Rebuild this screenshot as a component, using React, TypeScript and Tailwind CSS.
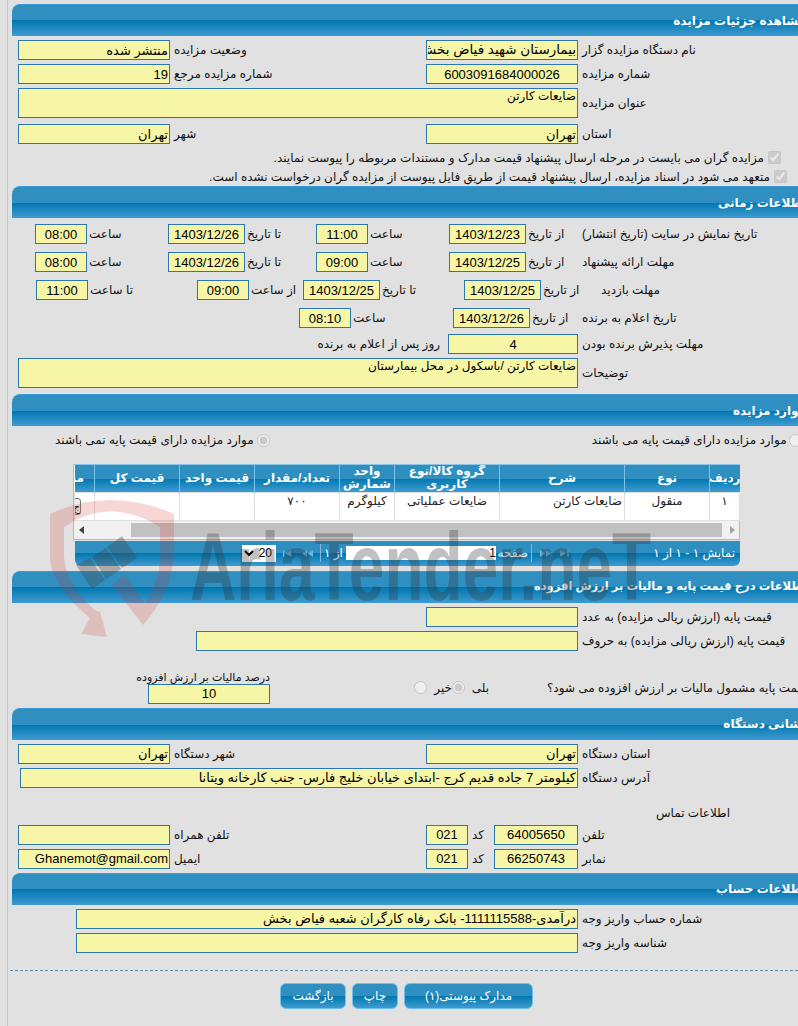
import type { ReactNode } from "react";

const font = "font-['Liberation_Sans','DejaVu_Sans',sans-serif]";
const band =
  "bg-[linear-gradient(to_bottom,#2e8fc0_0%,#2e8fc0_50%,#0077b0_50%,#3f9bd0_100%)]";

function Field({
  value = "",
  w,
  center,
  size = "text-[13px]",
}: {
  value?: string;
  w: string;
  center?: boolean;
  size?: string;
}) {
  return (
    <input
      readOnly
      value={value}
      dir="rtl"
      className={`${w} ${size} h-5 shrink-0 border border-[#2b78ab] bg-[#f7f5a6] px-px text-black outline-none ${
        center ? "text-center" : "text-right"
      }`}
    />
  );
}

function Area({ value = "" }: { value?: string }) {
  return (
    <textarea
      readOnly
      dir="rtl"
      value={value}
      className="h-[30px] w-[560px] shrink-0 resize-none overflow-hidden border border-[#2b78ab] bg-[#f7f5a6] px-px text-[12px] leading-[15px] text-black outline-none"
    />
  );
}

function Label({ children, w, tight }: { children?: ReactNode; w?: string; tight?: boolean }) {
  return (
    <span
      dir="rtl"
      className={`${w ?? ""} ${tight ? "pl-[2px]" : "pl-1"} shrink-0 whitespace-nowrap text-left text-[12px] text-[#111]`}
    >
      {children}
    </span>
  );
}

function Header({ title, size = "text-[12px]" }: { title: string; size?: string }) {
  return (
    <div className={`ml-3 flex h-8 w-[794px] items-center justify-end rounded-tl-lg border-t border-[#3a9ad9] ${band}`}>
      <span dir="rtl" className={`${size} whitespace-nowrap font-bold text-white`}>
        {title}
      </span>
    </div>
  );
}

function Row({ children, className = "" }: { children: ReactNode; className?: string }) {
  return <div className={`flex items-center ${className}`}>{children}</div>;
}

function PagerIcon({ d, w }: { d: string; w: string }) {
  return (
    <svg viewBox="0 0 11 7" className={`${w} h-[7px] shrink-0`}>
      <path d={d} fill="#6fb3d6" />
    </svg>
  );
}

const columns = [
  { title: "ردیف", w: "w-[30px]" },
  { title: "نوع", w: "w-[85px]" },
  { title: "شرح", w: "w-[125px]" },
  { title: "گروه کالا/نوع کاربری", w: "w-[105px]" },
  { title: "واحد شمارش", w: "w-[55px]" },
  { title: "تعداد/مقدار", w: "w-[85px]" },
  { title: "قیمت واحد", w: "w-[75px]" },
  { title: "قیمت کل", w: "w-[85px]" },
  { title: "مدیریت", w: "w-[20px]" },
];

const cell = "border border-[#e0e0e0] leading-4";

function ItemsTable() {
  return (
    <div className="ml-[73px] mt-4 w-[667px] border border-[#8cc6e6] bg-white">
      <table dir="rtl" className="w-[665px] table-fixed border-collapse text-[12px]">
        <thead>
          <tr className={`h-[27px] ${band}`}>
            {columns.map((c) => (
              <th
                key={c.title}
                className={`${c.w} overflow-hidden border-l border-[#7cc4ea] px-0 text-center text-[12px] font-bold leading-[13px] text-white last:border-l-0 last:whitespace-nowrap last:pr-[10px] last:text-right`}
              >
                {c.title}
              </th>
            ))}
          </tr>
        </thead>
        <tbody>
          <tr className="h-[28px] align-top text-[#222]">
            <td className={`${cell} text-center`}>١</td>
            <td className={`${cell} text-center`}>منقول</td>
            <td className={`${cell} pr-0.5 text-right`}>ضایعات کارتن</td>
            <td className={`${cell} text-center`}>ضایعات عملیاتی</td>
            <td className={`${cell} text-center`}>کیلوگرم</td>
            <td className={`${cell} text-center`}>٧٠٠</td>
            <td className={cell} />
            <td className={cell} />
            <td className={`${cell} overflow-hidden`}>
              <button className="mr-[13px] mt-[5px] block h-[17px] w-[30px] rounded-[3px] border border-[#777] bg-[#efefef] text-right text-[11px]">
                ج
              </button>
            </td>
          </tr>
        </tbody>
      </table>
      <div className="flex h-[18px] items-center bg-[#f1f1f1]">
        <svg width="8" height="8" viewBox="0 0 8 8" className="ml-[4px]">
          <path d="M6 0v8L1 4z" fill="#444" />
        </svg>
        <div className="ml-[45px] h-[14px] w-[591px] bg-[#c1c1c1]" />
        <svg width="8" height="8" viewBox="0 0 8 8" className="ml-[6px]">
          <path d="M2 0v8l5-4z" fill="#a3a3a3" />
        </svg>
      </div>
    </div>
  );
}

function Pager() {
  return (
    <div className={`ml-[75px] mt-px flex h-[25px] w-[665px] items-center rounded-b-md ${band} text-[12px] text-white`}>
      <select dir="rtl" defaultValue="20" className="ml-[167px] h-[17px] w-[34px] shrink-0 bg-white text-[12px] text-black">
        <option>20</option>
      </select>
      <span className="ml-[7px]">
        <PagerIcon w="w-[10px]" d="M0 0h1.5v7H0zM9 0v7L2.5 3.500z" />
      </span>
      <span className="ml-[9px]">
        <PagerIcon w="w-[11px]" d="M5 0v7L0 3.500zM11 0v7L6 3.500z" />
      </span>
      <span className="ml-[7px] h-[18px] w-px shrink-0 bg-[#7fb8d6]" />
      <span dir="rtl" className="w-[25px] shrink-0 whitespace-nowrap text-center">
        از ١
      </span>
      <input readOnly value="1" dir="rtl" className="h-[14px] w-[150px] shrink-0 bg-white text-[12px] text-black outline-none" />
      <span dir="rtl" className="ml-1 w-[28px] shrink-0 whitespace-nowrap text-left">
        صفحه
      </span>
      <span className="ml-[3px] h-[18px] w-px shrink-0 bg-[#7fb8d6]" />
      <span className="ml-2">
        <PagerIcon w="w-[11px]" d="M0 0v7l5-3.500zM6 0v7l5-3.500z" />
      </span>
      <span className="ml-[9px]">
        <PagerIcon w="w-[10px]" d="M0 0v7l6.500-3.500zM8 0h1.500v7H8z" />
      </span>
      <span dir="rtl" className="ml-auto mr-[5px] whitespace-nowrap">
        نمایش ١ - ١ از ١
      </span>
    </div>
  );
}

function Watermark() {
  return (
    <div className="pointer-events-none absolute left-[40px] top-[490px] h-[160px] w-[680px]">
      <svg width="260" height="160" viewBox="0 0 260 160" className="absolute left-0 top-0">
        <path
          d="M10 24 Q70 -4 134 24 L134 67 Q130 105 103 135 L72 95 L84 84 L105 113 Q120 90 120 67 L120 37 Q70 6 24 37 L24 67 Q26 95 55 120 L60 122 L67 147 L41 144 L50 128 Q10 95 10 67 Z"
          fill="#d83030"
          opacity="0.2"
        />
        <path d="M36 75 L50 68 L65 90 L52 99 Z" fill="#444" opacity="0.35" />
        <path d="M67 57 L82 46 L97 68 L82 78 Z" fill="#444" opacity="0.35" />
        <path d="M52 67 L66 58 L81 79 L66 89 Z" fill="#444" opacity="0.35" />
      </svg>
      <span className="absolute left-[150px] top-[45px] origin-left scale-y-[1.5] whitespace-nowrap font-['Liberation_Sans'] text-[64px] font-bold leading-none text-[#333]/30">
        AriaTender.neT
      </span>
    </div>
  );
}

export default function App() {
  return (
    <div className={`relative h-[1026px] w-[798px] overflow-hidden bg-[#e1e1e1] ${font}`}>
      <div className="absolute bottom-0 left-[7px] top-0 w-px bg-[#c8c8c8]" />

      <div className="pt-1">
        <Header title="مشاهده جزئیات مزایده" />
        <div className="pl-[18px] pt-1">
          <Row>
            <Field w="w-[152px]" value="منتشر شده" />
            <Label w="w-[256px]">وضعیت مزایده</Label>
            <Field w="w-[152px]" size="text-[13.5px]" value="بیمارستان شهید فیاض بخش" />
            <Label>نام دستگاه مزایده گزار</Label>
          </Row>
          <Row className="mt-1">
            <Field w="w-[152px]" value="19" />
            <Label w="w-[256px]">شماره مزایده مرجع</Label>
            <Field w="w-[152px]" value="6003091684000026" center />
            <Label>شماره مزایده</Label>
          </Row>
          <Row className="mt-1">
            <Area value="ضایعات کارتن" />
            <Label>عنوان مزایده</Label>
          </Row>
          <Row className="mt-1.5">
            <Field w="w-[152px]" value="تهران" />
            <Label w="w-[256px]">شهر</Label>
            <Field w="w-[152px]" value="تهران" />
            <Label>استان</Label>
          </Row>
          <div dir="rtl" className="mt-1 flex h-[19px] items-center pr-[17px] text-[12px] text-[#111]">
            <input type="checkbox" checked disabled readOnly className="ml-1" />
            <span>مزایده گران می بایست در مرحله ارسال پیشنهاد قیمت مدارک و مستندات مربوطه را پیوست نمایند.</span>
          </div>
          <div dir="rtl" className="flex h-[19px] items-center pr-[11px] text-[12px] text-[#111]">
            <input type="checkbox" checked disabled readOnly className="ml-1" />
            <span>متعهد می شود در اسناد مزایده، ارسال پیشنهاد قیمت از طریق فایل پیوست از مزایده گران درخواست نشده است.</span>
          </div>
        </div>
      </div>

      <div>
        <Header title="اطلاعات زمانی" />
        <div className="pl-[18px]">
          <Row className="ml-[17px] mt-1.5">
            <Field w="w-[52px]" value="08:00" center />
            <Label tight w="w-[81px]">ساعت</Label>
            <Field w="w-[77px]" value="1403/12/26" center />
            <Label tight w="w-[71px]">تا تاریخ</Label>
            <Field w="w-[52px]" value="11:00" center />
            <Label tight w="w-[81px]">ساعت</Label>
            <Field w="w-[77px]" value="1403/12/23" center />
            <Label tight w="w-[54px]">از تاریخ</Label>
            <Label tight>تاریخ نمایش در سایت (تاریخ انتشار)</Label>
          </Row>
          <Row className="ml-[17px] mt-2">
            <Field w="w-[52px]" value="08:00" center />
            <Label tight w="w-[81px]">ساعت</Label>
            <Field w="w-[77px]" value="1403/12/26" center />
            <Label tight w="w-[71px]">تا تاریخ</Label>
            <Field w="w-[52px]" value="09:00" center />
            <Label tight w="w-[81px]">ساعت</Label>
            <Field w="w-[77px]" value="1403/12/25" center />
            <Label tight w="w-[54px]">از تاریخ</Label>
            <Label tight>مهلت ارائه پیشنهاد</Label>
          </Row>
          <Row className="ml-[18px] mt-2">
            <Field w="w-[52px]" value="11:00" center />
            <Label tight w="w-[109px]">تا ساعت</Label>
            <Field w="w-[52px]" value="09:00" center />
            <Label tight w="w-[54px]">از ساعت</Label>
            <Field w="w-[77px]" value="1403/12/25" center />
            <Label tight w="w-[84px]">تا تاریخ</Label>
            <Field w="w-[77px]" value="1403/12/25" center />
            <Label tight w="w-[58px]">از تاریخ</Label>
            <Label tight>مهلت بازدید</Label>
          </Row>
          <Row className="ml-[281px] mt-2">
            <Field w="w-[52px]" value="08:10" center />
            <Label tight w="w-[102px]">ساعت</Label>
            <Field w="w-[77px]" value="1403/12/26" center />
            <Label tight w="w-[50px]">از تاریخ</Label>
            <Label tight>تاریخ اعلام به برنده</Label>
          </Row>
          <Row className="mt-1.5">
            <span dir="rtl" className="w-[430px] shrink-0 pr-2 text-[12px] text-[#111]">
              روز پس از اعلام به برنده
            </span>
            <Field w="w-[130px]" value="4" center />
            <Label>مهلت پذیرش برنده بودن</Label>
          </Row>
          <Row className="mt-1">
            <Area value="ضایعات کارتن /باسکول در محل بیمارستان" />
            <Label>توضیحات</Label>
          </Row>
        </div>
      </div>

      <div className="mt-1.5">
        <Header title="موارد مزایده" />
        <Row className="ml-[55px] mt-1.5 h-4 text-[12px] text-[#111]">
          <span dir="rtl" className="whitespace-nowrap">موارد مزایده دارای قیمت پایه نمی باشند</span>
          <input type="radio" disabled defaultChecked name="base" className="ml-[3px]" />
          <span dir="rtl" className="ml-[322px] whitespace-nowrap">موارد مزایده دارای قیمت پایه می باشند</span>
          <input type="radio" disabled name="base" className="ml-0.5 shrink-0" />
        </Row>
        <ItemsTable />
        <Pager />
      </div>

      <div className="mt-[5px]">
        <Header title="اطلاعات درج قیمت پایه و مالیات بر ارزش افزوده" size="text-[11.5px]" />
        <div className="pl-[196px] pt-1">
          <Row className="ml-[230px]">
            <Field w="w-[152px]" />
            <Label>قیمت پایه (ارزش ریالی مزایده) به عدد</Label>
          </Row>
          <Row className="mt-1">
            <Field w="w-[382px]" />
            <Label>قیمت پایه (ارزش ریالی مزایده) به حروف</Label>
          </Row>
        </div>
        <div className="mt-[19px] flex pl-[135px]">
          <div className="flex w-[135px] shrink-0 flex-col items-end">
            <span dir="rtl" className="whitespace-nowrap text-[11px] leading-[14px] text-[#111]">درصد مالیات بر ارزش افزوده</span>
            <Field w="w-[122px]" value="10" center />
          </div>
          <Row className="ml-[144px] mt-[4px] h-[28px] shrink-0 self-start text-[12px] text-[#111]">
            <input type="radio" disabled name="tax" className="m-0" />
            <span dir="rtl" className="ml-[5px] w-[20px] whitespace-nowrap">خیر</span>
            <input type="radio" disabled defaultChecked name="tax" className="m-0" />
            <span dir="rtl" className="ml-1 w-[20px] whitespace-nowrap">بلی</span>
            <span dir="rtl" className="ml-[58px] whitespace-nowrap">قیمت پایه مشمول مالیات بر ارزش افزوده می شود؟</span>
          </Row>
        </div>
      </div>

      <div className="mt-1">
        <Header title="نشانی دستگاه" />
        <div className="pl-[18px] pt-1">
          <Row>
            <Field w="w-[152px]" value="تهران" />
            <Label w="w-[256px]">شهر دستگاه</Label>
            <Field w="w-[152px]" value="تهران" />
            <Label>استان دستگاه</Label>
          </Row>
          <Row className="ml-0.5 mt-1">
            <Field w="w-[558px]" value="کیلومتر 7 جاده قدیم کرج -ابتدای خیابان خلیج فارس- جنب کارخانه ویتانا" />
            <Label>آدرس دستگاه</Label>
          </Row>
          <div dir="rtl" className="mt-4 h-[21px] pr-[68px] text-[12px] text-[#111]">
            اطلاعات تماس
          </div>
          <Row>
            <Field w="w-[152px]" />
            <Label w="w-[256px]">تلفن همراه</Label>
            <Field w="w-[42px]" value="021" center />
            <Label w="w-[26px]">کد</Label>
            <Field w="w-[84px]" value="64005650" center />
            <Label>تلفن</Label>
          </Row>
          <Row className="mt-1">
            <Field w="w-[152px]" value="Ghanemot@gmail.com" />
            <Label w="w-[256px]">ایمیل</Label>
            <Field w="w-[42px]" value="021" center />
            <Label w="w-[26px]">کد</Label>
            <Field w="w-[84px]" value="66250743" center />
            <Label>نمابر</Label>
          </Row>
        </div>
      </div>

      <div className="mt-1">
        <Header title="اطلاعات حساب" />
        <div className="pl-[76px] pt-1">
          <Row>
            <Field w="w-[502px]" value="درآمدی-1111115588- بانک رفاه کارگران شعبه فیاض بخش" />
            <Label>شماره حساب واریز وجه</Label>
          </Row>
          <Row className="mt-1">
            <Field w="w-[502px]" />
            <Label>شناسه واریز وجه</Label>
          </Row>
        </div>
      </div>

      <div className="ml-2.5 mt-[17px] border-t border-dashed border-[#5f8fae]" />
      <div className="ml-[280px] mt-[12px] flex gap-1.5 text-[12px] text-white">
        <button className={`h-[26px] w-[66px] rounded-md border border-[#6cc0ea] ${band}`}>بازگشت</button>
        <button className={`h-[26px] w-[46px] rounded-md border border-[#6cc0ea] ${band}`}>چاپ</button>
        <button dir="rtl" className={`h-[26px] w-[129px] rounded-md border border-[#6cc0ea] ${band}`}>
          مدارک پیوستی(١)
        </button>
      </div>

      <Watermark />
    </div>
  );
}
